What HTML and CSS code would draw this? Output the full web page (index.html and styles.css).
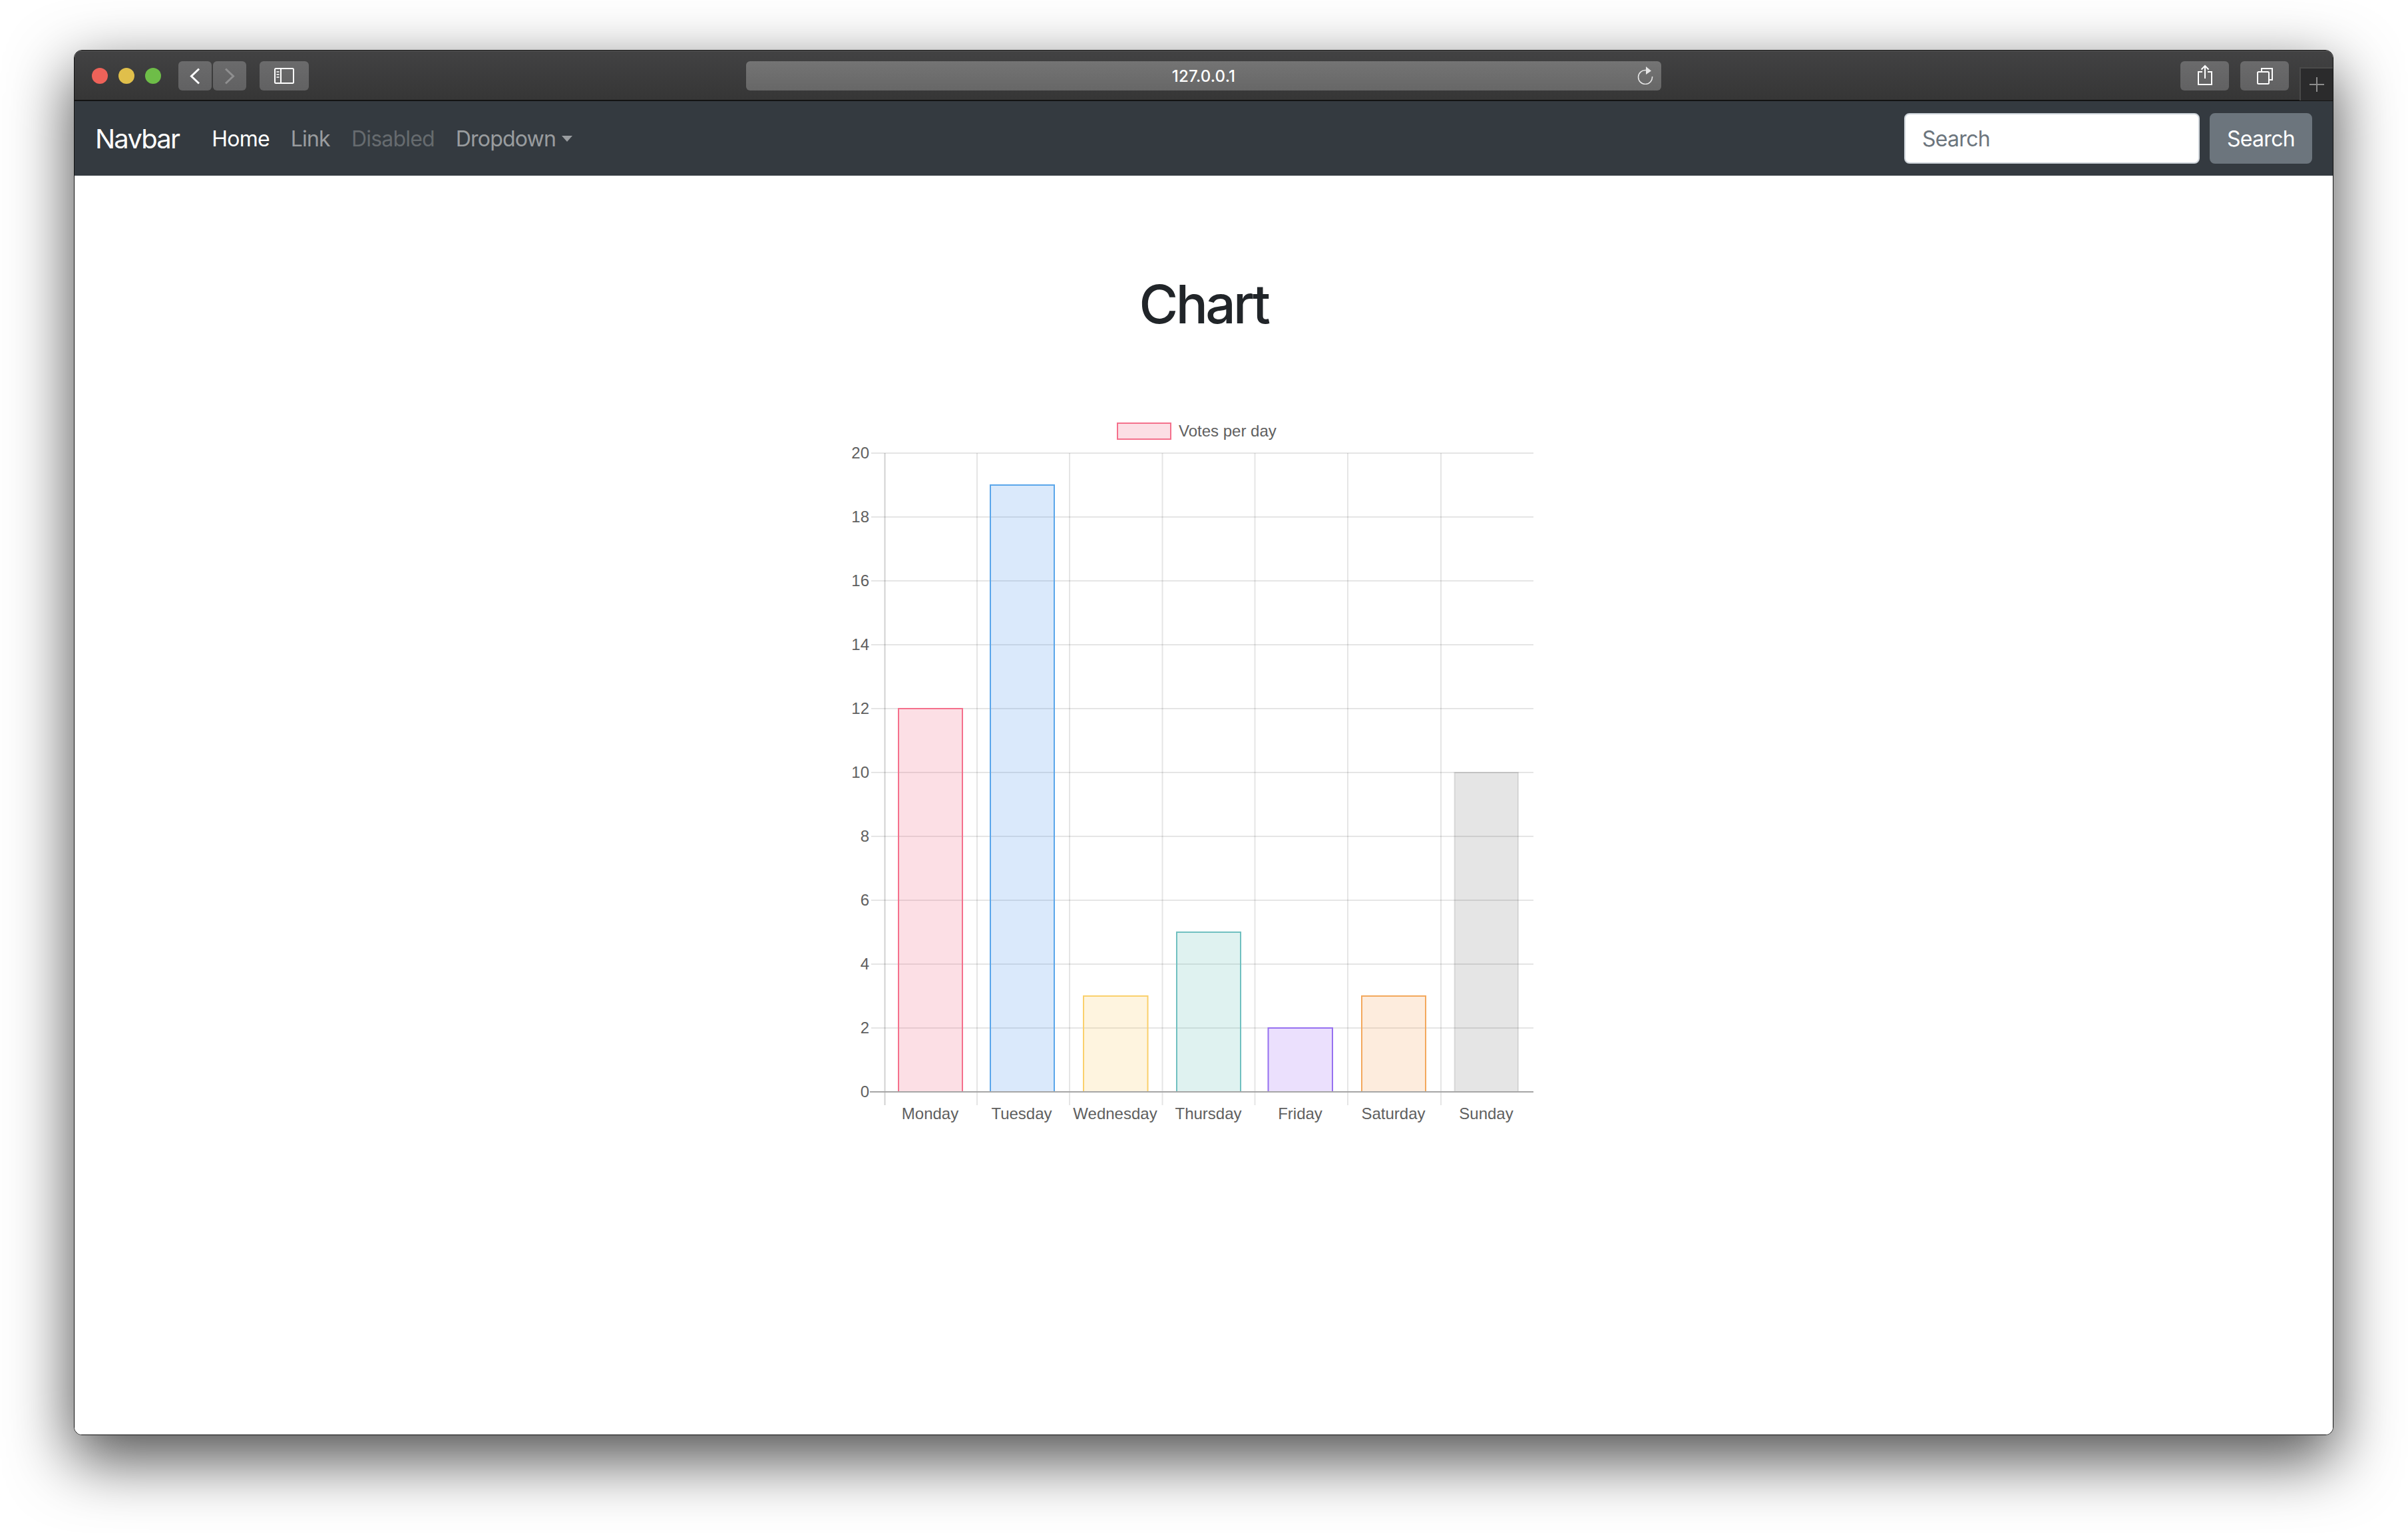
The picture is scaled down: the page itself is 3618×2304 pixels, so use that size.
FILE: index.html
```html
<!DOCTYPE html>
<html lang="en">
<head>
<meta charset="utf-8">
<title>Chart</title>
<link rel="stylesheet" href="styles.css">
</head>
<body>
<div class="window">
  <header class="titlebar">
    <div class="lights">
      <span class="light light-red"></span>
      <span class="light light-yellow"></span>
      <span class="light light-green"></span>
    </div>
    <button class="tb-btn tb-nav" type="button" aria-label="Back">
      <svg width="16" height="25" viewBox="0 0 16 25"><path class="ico-white" d="M14 1.5 L2.5 12.5 L14 23.5"/></svg>
    </button>
    <button class="tb-btn tb-nav tb-next" type="button" aria-label="Forward">
      <svg width="16" height="25" viewBox="0 0 16 25"><path class="ico-dim" d="M2 1.5 L13.5 12.5 L2 23.5"/></svg>
    </button>
    <button class="tb-btn tb-side" type="button" aria-label="Sidebar">
      <svg width="30" height="24" viewBox="0 0 30 24"><rect class="ico-line" x="1" y="1" width="28" height="22" rx="1.5"/><path class="ico-line" d="M10 1 V23"/><path class="ico-thin" d="M3.500 6 H7.500 M3.500 10 H7.500 M3.500 14 H7.500"/></svg>
    </button>
    <div class="urlbar">
      <span class="url">127.0.0.1</span>
      <svg class="reload" width="24" height="27" viewBox="0 0 24 27"><path class="ico-thin-light" d="M13 5.500 A10.500 10.500 0 1 0 22.500 15"/><path class="ico-fill-light" d="M13 0 L21 6.500 L13 12 Z"/></svg>
    </div>
    <button class="tb-btn tb-share" type="button" aria-label="Share">
      <svg width="24" height="32" viewBox="0 0 24 32"><path class="ico-thin-white" d="M8 11 H2 V30 H22 V11 H16 M12 2 V21 M6.500 7.500 L12 2 L17.500 7.500"/></svg>
    </button>
    <button class="tb-btn tb-tabs" type="button" aria-label="Tabs">
      <svg width="26" height="26" viewBox="0 0 26 26"><path class="ico-thin-white" d="M8 6 V2 H24 V19 H20"/><rect class="ico-thin-white" x="2" y="7" width="17" height="18" rx="1.500"/></svg>
    </button>
    <div class="newtab">
      <svg width="24" height="24" viewBox="0 0 24 24"><path class="ico-plus" d="M12 1 V23 M1 12 H23"/></svg>
    </div>
  </header>

  <nav class="navbar">
    <a class="brand" href="#">Navbar</a>
    <ul class="navlinks">
      <li><a class="navlink navlink-active" href="#">Home</a></li>
      <li><a class="navlink" href="#">Link</a></li>
      <li><a class="navlink navlink-disabled" href="#">Disabled</a></li>
      <li><a class="navlink navlink-drop" href="#">Dropdown<span class="caret"></span></a></li>
    </ul>
    <form class="searchform">
      <input class="searchinput" type="search" placeholder="Search" aria-label="Search">
      <button class="searchbtn" type="button">Search</button>
    </form>
  </nav>

  <main class="content">
    <h1 class="title">Chart</h1>
    <svg class="chart" width="1077" height="1080" viewBox="1270 620 1077 1080" role="img" aria-label="Votes per day">
      <rect class="legend-box" x="1679" y="636" width="80" height="24"/>
      <text class="chart-text" x="1771" y="656">Votes per day</text>

      <g class="grid">
        <path d="M1309 681 H2304 M1309 777 H2304 M1309 873 H2304 M1309 969 H2304 M1309 1065 H2304 M1309 1161 H2304 M1309 1257 H2304 M1309 1353 H2304 M1309 1449 H2304 M1309 1545 H2304"/>
        <path d="M1468 681 V1661 M1607 681 V1661 M1746.500 681 V1661 M1885.500 681 V1661 M2025 681 V1661 M2165 681 V1661"/>
      </g>
      <path class="grid-first" d="M1329.500 681 V1661"/>

      <path class="bar bar-red" d="M1350 1641 V1065 H1446 V1641"/>
      <path class="bar bar-blue" d="M1488 1641 V729 H1584 V1641"/>
      <path class="bar bar-yellow" d="M1628 1641 V1497 H1724.500 V1641"/>
      <path class="bar bar-teal" d="M1768 1641 V1401 H1864 V1641"/>
      <path class="bar bar-purple" d="M1905.500 1641 V1545 H2002 V1641"/>
      <path class="bar bar-orange" d="M2046 1641 V1497 H2142 V1641"/>
      <path class="bar bar-grey" d="M2185.500 1641 V1161 H2281 V1641"/>

      <path class="grid-zero" d="M1307 1641 H2304"/>

      <g class="chart-text ylabels">
        <text x="1306" y="689">20</text>
        <text x="1306" y="785">18</text>
        <text x="1306" y="881">16</text>
        <text x="1306" y="977">14</text>
        <text x="1306" y="1073">12</text>
        <text x="1306" y="1169">10</text>
        <text x="1306" y="1265">8</text>
        <text x="1306" y="1361">6</text>
        <text x="1306" y="1457">4</text>
        <text x="1306" y="1553">2</text>
        <text x="1306" y="1649">0</text>
      </g>
      <g class="chart-text xlabels">
        <text x="1397.500" y="1682">Monday</text>
        <text x="1535" y="1682">Tuesday</text>
        <text x="1675.500" y="1682">Wednesday</text>
        <text x="1815.500" y="1682">Thursday</text>
        <text x="1953.500" y="1682">Friday</text>
        <text x="2093.500" y="1682">Saturday</text>
        <text x="2233" y="1682">Sunday</text>
      </g>
    </svg>
  </main>
</div>
</body>
</html>
```

FILE: styles.css
```css
* { box-sizing: border-box; }

html, body {
  margin: 0;
  height: 100%;
  background: #fff;
}

body {
  width: 3618px;
  height: 2304px;
  padding: 75px 112px 147px 111px;
  overflow: hidden;
  font-family: Inter, "Liberation Sans", sans-serif;
}

.window {
  display: flex;
  flex-direction: column;
  height: 100%;
  background: #fff;
  border: 1px solid #111;
  border-radius: 12px;
  box-shadow: 0 34px 94px 4px rgba(0, 0, 0, 0.68);
  overflow: hidden;
}

/* title bar */
.titlebar {
  flex: none;
  display: flex;
  align-items: flex-start;
  height: 76px;
  padding: 16px 0 0 26px;
  background: linear-gradient(#424243, #363636);
  border-bottom: 2px solid #131313;
  box-shadow: inset 0 1px 0 #555;
}

.lights {
  display: flex;
  gap: 16px;
  margin: 10px 26px 0 0;
}

.light {
  width: 24px;
  height: 24px;
  border-radius: 50%;
}
.light-red { background: #ee6259; }
.light-yellow { background: #e0bf4b; }
.light-green { background: #6ebd48; }

.tb-btn {
  display: flex;
  align-items: center;
  justify-content: center;
  height: 44px;
  padding: 0;
  border: 0;
  border-radius: 6px;
  background: linear-gradient(#6b6b6c, #616162);
}
.tb-nav { width: 50px; }
.tb-next { margin-left: 2px; }
.tb-side { width: 74px; margin-left: 20px; }
.tb-share { width: 73px; margin-left: 780px; padding-bottom: 3px; }
.tb-tabs { width: 73px; margin-left: 17px; }

.urlbar {
  position: relative;
  display: flex;
  align-items: center;
  justify-content: center;
  width: 1377px;
  height: 44px;
  margin-left: 657px;
  border-radius: 6px;
  background: linear-gradient(#747474, #676767);
}
.url {
  padding-top: 1px;
  font-size: 24px;
  font-weight: 500;
  letter-spacing: 0.2px;
  color: #fff;
}
.reload {
  position: absolute;
  right: 12px;
  top: 8px;
}

.newtab {
  display: flex;
  align-items: center;
  justify-content: center;
  width: 50px;
  height: 50px;
  margin: 9px 0 0 16px;
  background: #2b2b2c;
  border-top: 2px solid #4a4a4a;
  border-left: 2px solid #4a4a4a;
}

.ico-white, .ico-dim, .ico-line, .ico-thin, .ico-thin-white, .ico-thin-light, .ico-plus {
  fill: none;
  stroke-linejoin: miter;
}
.ico-white { stroke: #fff; stroke-width: 3; }
.ico-dim { stroke: #8f8f90; stroke-width: 3; }
.ico-line { stroke: #fff; stroke-width: 2; }
.ico-thin { stroke: #e0e0e0; stroke-width: 2; }
.ico-thin-white { stroke: #fff; stroke-width: 2; }
.ico-thin-light { stroke: #e6e6e6; stroke-width: 1.6; }
.ico-fill-light { fill: #e6e6e6; }
.ico-plus { stroke: #8c8c8c; stroke-width: 2; }

/* navbar */
.navbar {
  flex: none;
  display: flex;
  align-items: center;
  height: 112px;
  padding: 0 31px 0 31px;
  background: #343a40;
}

.brand {
  margin-right: 33px;
  font-size: 40px;
  letter-spacing: -1.8px;
  color: #fff;
  text-decoration: none;
}

.navlinks {
  display: flex;
  margin: 0;
  padding: 0;
  list-style: none;
}

.navlink {
  display: flex;
  align-items: center;
  padding: 0 16px;
  font-size: 32px;
  letter-spacing: -0.8px;
  color: rgba(255, 255, 255, 0.5);
  text-decoration: none;
}
.navlink-active { color: #fff; }
.navlink-disabled { color: rgba(255, 255, 255, 0.25); }

.caret {
  width: 0;
  height: 0;
  margin-left: 9px;
  border-top: 9px solid currentColor;
  border-left: 8.500px solid transparent;
  border-right: 8.500px solid transparent;
}

.searchform {
  display: flex;
  gap: 15px;
  margin-left: auto;
}

.searchinput {
  width: 444px;
  height: 76px;
  padding: 0 25px;
  font: inherit;
  font-size: 32px;
  letter-spacing: -0.7px;
  color: #495057;
  background: #fff;
  border: 2px solid #ced4da;
  border-radius: 8px;
  outline: 0;
  appearance: none;
}
.searchinput::placeholder { color: #6c757d; opacity: 1; }

.searchbtn {
  width: 154px;
  height: 76px;
  padding: 0;
  font: inherit;
  font-size: 32px;
  letter-spacing: -0.7px;
  color: #fff;
  background: #6c757d;
  border: 2px solid #6c757d;
  border-radius: 8px;
}

/* content */
.content {
  flex: 1;
  display: flex;
  flex-direction: column;
  align-items: center;
  background: #fff;
}

.title {
  margin: 145px 0 115px;
  font-size: 80px;
  font-weight: 540;
  line-height: 96px;
  letter-spacing: -3.6px;
  color: #212529;
}

.chart {
  display: block;
  flex: none;
}

.chart-text {
  font-family: "Liberation Sans", Arial, sans-serif;
  font-size: 24px;
  fill: #606060;
}
.ylabels { text-anchor: end; }
.xlabels { text-anchor: middle; }

.legend-box {
  fill: rgba(240, 95, 125, 0.2);
  stroke: #f4708c;
  stroke-width: 2;
}

.grid path { fill: none; stroke: rgba(0, 0, 0, 0.1); stroke-width: 2; }
.grid-first { fill: none; stroke: rgba(0, 0, 0, 0.18); stroke-width: 2; }
.grid-zero { fill: none; stroke: #a6a6a6; stroke-width: 2; }

.bar { stroke-width: 2; }
.bar-red { fill: rgba(240, 95, 125, 0.2); stroke: #f4708c; }
.bar-blue { fill: rgba(70, 145, 235, 0.2); stroke: #5aa6ea; }
.bar-yellow { fill: rgba(250, 200, 95, 0.2); stroke: #fad06c; }
.bar-teal { fill: rgba(95, 190, 180, 0.2); stroke: #70c0c0; }
.bar-purple { fill: rgba(153, 102, 245, 0.2); stroke: #9670f0; }
.bar-orange { fill: rgba(245, 160, 85, 0.2); stroke: #f3a85c; }
.bar-grey { fill: rgba(0, 0, 0, 0.1); stroke: rgba(0, 0, 0, 0.1); }
```
